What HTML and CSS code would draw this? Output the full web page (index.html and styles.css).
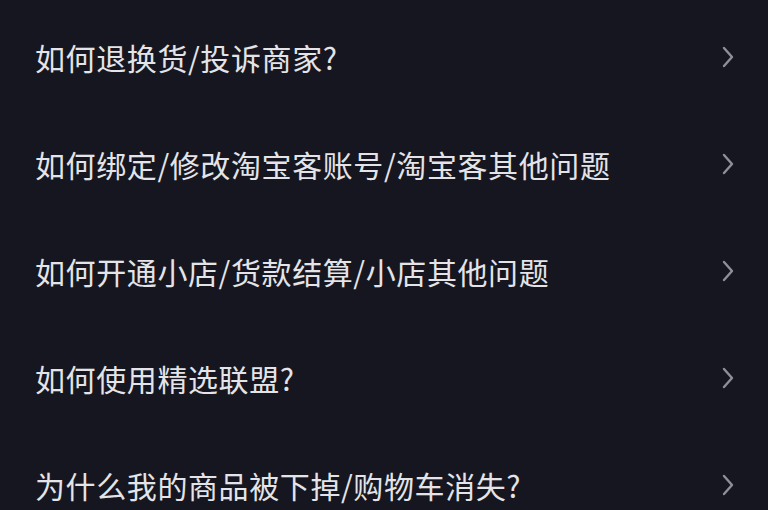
FILE: index.html
```html
<!DOCTYPE html>
<html lang="zh-CN">
<head>
<meta charset="utf-8">
<link rel="stylesheet" href="styles.css">
</head>
<body>
<ul class="faq">
  <li class="row"><span class="label">如何退换货/投诉商家?</span><svg class="chev" viewBox="0 0 12 22"><path d="M2 2 L10 11 L2 20"/></svg></li>
  <li class="row"><span class="label">如何绑定/修改淘宝客账号/淘宝客其他问题</span><svg class="chev" viewBox="0 0 12 22"><path d="M2 2 L10 11 L2 20"/></svg></li>
  <li class="row"><span class="label">如何开通小店/货款结算/小店其他问题</span><svg class="chev" viewBox="0 0 12 22"><path d="M2 2 L10 11 L2 20"/></svg></li>
  <li class="row"><span class="label">如何使用精选联盟?</span><svg class="chev" viewBox="0 0 12 22"><path d="M2 2 L10 11 L2 20"/></svg></li>
  <li class="row"><span class="label">为什么我的商品被下掉/购物车消失?</span><svg class="chev" viewBox="0 0 12 22"><path d="M2 2 L10 11 L2 20"/></svg></li>
</ul>
</body>
</html>
```

FILE: styles.css
```css
html, body {
  margin: 0;
  padding: 0;
  background: #15161f;
  height: 100%;
  overflow: hidden;
}
.faq {
  list-style: none;
  margin: 0;
  padding: 3px 0 0 0;
  font-family: "Noto Sans CJK SC", "Noto Sans", sans-serif;
}
.row {
  height: 107px;
  display: flex;
  align-items: center;
  justify-content: space-between;
  padding: 0 34px 0 35px;
}
.label {
  color: #e4e4e8;
  font-size: 30px;
  line-height: 1;
  letter-spacing: 0.6px;
  font-weight: 400;
}
.chev {
  width: 12px;
  height: 22px;
  fill: none;
  stroke: #8e8f97;
  stroke-width: 2.4;
  stroke-linecap: round;
  stroke-linejoin: round;
}
```
